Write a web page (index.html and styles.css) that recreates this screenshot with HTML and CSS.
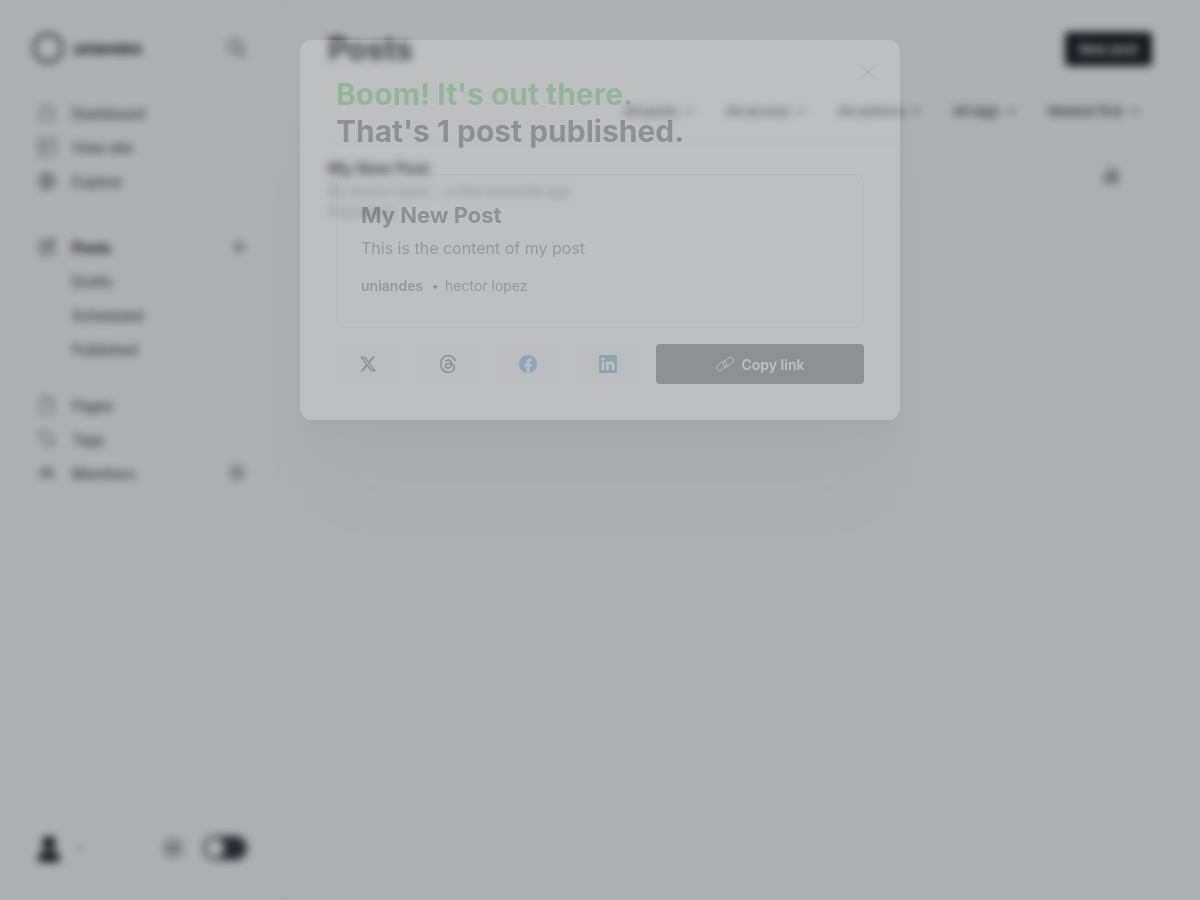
FILE: index.html
```html
<!DOCTYPE html>
<html lang="en">
<head>
<meta charset="utf-8">
<meta name="viewport" content="width=device-width, initial-scale=1">
<title>Posts</title>
<link rel="stylesheet" href="styles.css">
</head>
<body>
<div class="app">
  <nav class="sidebar" aria-label="Main">
    <header class="brand">
      <svg class="brand-logo" viewBox="0 0 32 32"><circle cx="16" cy="16" r="14"/></svg>
      <span class="brand-name">uniandes</span>
      <button class="plain" aria-label="Search"><svg class="icon-l" viewBox="0 0 20 20"><circle cx="8" cy="8" r="6.5"/><path d="M13 13l6 6"/></svg></button>
    </header>
    <ul class="menu">
      <li><a href="#"><svg class="icon" viewBox="0 0 18 18"><path d="M1 8l8-7 8 7M3 7v10h12V7"/></svg>Dashboard</a></li>
      <li><a href="#"><svg class="icon" viewBox="0 0 18 18"><rect x="1" y="1" width="16" height="16" rx="2"/><path d="M1 6h16M6 6v11"/></svg>View site</a></li>
      <li><a href="#"><svg class="icon" viewBox="0 0 18 18"><circle cx="9" cy="9" r="7.5"/><ellipse cx="9" cy="9" rx="3.5" ry="7.5"/><path d="M1.500 9h15M3 5h12M3 13h12"/></svg>Explore</a></li>
    </ul>
    <ul class="menu menu-posts">
      <li><a class="active" href="#"><svg class="icon" viewBox="0 0 18 18"><path d="M10 3H2v13h13V9M7 11l1-4 7-6 2 2-7 7z"/></svg>Posts</a><button class="plain" aria-label="New post"><svg class="icon-m plus" viewBox="0 0 16 16"><path d="M8 1v14M1 8h14"/></svg></button></li>
      <li><a class="sub" href="#">Drafts</a></li>
      <li><a class="sub" href="#">Scheduled</a></li>
      <li><a class="sub" href="#">Published</a></li>
    </ul>
    <ul class="menu">
      <li><a href="#"><svg class="icon" viewBox="0 0 18 18"><path d="M3 1h8l4 4v12H3zM11 1v4h4"/></svg>Pages</a></li>
      <li><a href="#"><svg class="icon" viewBox="0 0 18 18"><path d="M1 2l7-1 9 10-6 6L2 8z"/></svg>Tags</a></li>
      <li><a href="#"><svg class="icon" viewBox="0 0 18 18"><circle cx="6" cy="7" r="2.500"/><circle cx="12" cy="7" r="2.500"/><path d="M1 15c0-6 8-6 8 0 0-6 8-6 8 0"/></svg>Members</a><span class="count">0</span></li>
    </ul>
    <footer class="account">
      <button class="plain user" aria-label="Account"><svg class="avatar" viewBox="0 0 32 32"><circle cx="17" cy="11" r="7"/><path d="M6 26c0-5 4-7 11-7s11 2 11 7-4 4-11 4-11 1-11-4z"/></svg><svg class="chevron" viewBox="0 0 10 6"><path d="M1 1l4 4 4-4"/></svg></button>
      <button class="plain settings" aria-label="Settings"><svg class="icon-xl" viewBox="0 0 24 24"><circle cx="12" cy="12" r="9.500"/><circle cx="12" cy="12" r="4"/><path d="M12 1v22M1 12h22M4 4l16 16M20 4L4 20"/></svg></button>
      <input class="toggle" type="checkbox" aria-label="Night mode">
    </footer>
  </nav>
  <main class="content">
    <div class="page-head"><h1>Posts</h1><button class="new-post">New post</button></div>
    <div class="filters">
      <label><select aria-label="Type"><option>All posts</option></select><svg class="chevron" viewBox="0 0 10 6"><path d="M1 1l4 4 4-4"/></svg></label>
      <label><select aria-label="Access"><option>All access</option></select><svg class="chevron" viewBox="0 0 10 6"><path d="M1 1l4 4 4-4"/></svg></label>
      <label><select aria-label="Author"><option>All authors</option></select><svg class="chevron" viewBox="0 0 10 6"><path d="M1 1l4 4 4-4"/></svg></label>
      <label><select aria-label="Tag"><option>All tags</option></select><svg class="chevron" viewBox="0 0 10 6"><path d="M1 1l4 4 4-4"/></svg></label>
      <label><select aria-label="Sort"><option>Newest first</option></select><svg class="chevron" viewBox="0 0 10 6"><path d="M1 1l4 4 4-4"/></svg></label>
    </div>
    <article class="row">
      <div><h2>My New Post</h2><p>By hector lopez - a few seconds ago</p><p>Published</p></div>
      <button class="stats" aria-label="Analytics"><svg class="icon-m" viewBox="0 0 16 16"><path d="M1 9h4v6H1zM6 1h4v14H6zM11 6h4v9h-4z"/></svg></button>
    </article>
  </main>
</div>
<div class="overlay">
  <section class="modal" role="dialog" aria-modal="true" aria-labelledby="modal-title">
    <button class="close" aria-label="Close"><svg viewBox="0 0 16 16"><path d="M.5.5l15 15M15.500.5l-15 15"/></svg></button>
    <h2 class="modal-title" id="modal-title"><span>Boom! It's out there.</span><br>That's 1 post published.</h2>
    <a class="preview" href="#">
      <h3>My New Post</h3>
      <p class="excerpt">This is the content of my post</p>
      <p class="meta"><strong>uniandes</strong><span class="dot">•</span><span>hector lopez</span></p>
    </a>
    <div class="share">
      <a class="dark" href="#" aria-label="Share on X"><svg viewBox="0 0 24 24"><path d="M18.244 2.250h3.308l-7.227 8.260 8.502 11.240H16.170l-5.214-6.817L4.990 21.750H1.680l7.730-8.835L1.254 2.250H8.080l4.713 6.231zm-1.161 17.520h1.833L7.084 4.126H5.117z"/></svg></a>
      <a class="dark" href="#" aria-label="Share on Threads"><svg viewBox="0 0 24 24"><path d="M12.186 24h-.007c-3.581-.024-6.334-1.205-8.184-3.509C2.350 18.440 1.500 15.586 1.472 12.010v-.017c.030-3.579.879-6.430 2.525-8.482C5.845 1.205 8.600.024 12.180 0h.014c2.746.020 5.043.725 6.826 2.098 1.677 1.290 2.858 3.130 3.509 5.467l-2.040.569c-1.104-3.960-3.898-5.984-8.304-6.015-2.910.022-5.110.936-6.540 2.717C4.307 6.504 3.616 8.914 3.589 12c.027 3.086.718 5.496 2.057 7.164 1.430 1.783 3.631 2.698 6.540 2.717 2.623-.020 4.358-.631 5.800-2.045 1.647-1.613 1.618-3.593 1.090-4.798-.310-.710-.873-1.300-1.634-1.750-.192 1.352-.622 2.446-1.284 3.272-.886 1.102-2.140 1.704-3.730 1.790-1.202.065-2.361-.218-3.259-.801-1.063-.689-1.685-1.740-1.752-2.964-.065-1.190.408-2.285 1.330-3.082.880-.760 2.119-1.207 3.583-1.291a13.853 13.853 0 0 1 3.020.142c-.126-.742-.375-1.332-.750-1.757-.513-.586-1.308-.883-2.359-.890h-.029c-.844 0-1.992.232-2.721 1.320L7.734 7.847c.980-1.454 2.568-2.256 4.478-2.256h.044c3.194.020 5.097 1.975 5.287 5.388.108.046.216.094.321.142 1.490.700 2.580 1.761 3.154 3.070.797 1.820.871 4.790-1.548 7.158-1.850 1.810-4.094 2.628-7.277 2.650Zm1.003-11.690c-.242 0-.487.007-.739.021-1.836.103-2.980.946-2.916 2.143.067 1.256 1.452 1.839 2.784 1.767 1.224-.065 2.818-.543 3.086-3.710a10.500 10.500 0 0 0-2.215-.221z"/></svg></a>
      <a class="facebook" href="#" aria-label="Share on Facebook"><svg viewBox="0 0 24 24"><path d="M24 12.073C24 5.446 18.627 0 12 0S0 5.446 0 12.073c0 5.990 4.388 10.954 10.125 11.854v-8.385H7.078v-3.469h3.047V9.430c0-3.007 1.792-4.669 4.533-4.669 1.312 0 2.686.235 2.686.235v2.953H15.830c-1.491 0-1.956.925-1.956 1.874v2.250h3.328l-.532 3.469h-2.796v8.385C19.612 23.027 24 18.062 24 12.073z"/></svg></a>
      <a class="linkedin" href="#" aria-label="Share on LinkedIn"><svg viewBox="0 0 24 24"><rect width="24" height="24" rx="2"/><g fill="#fff"><circle cx="5.340" cy="5.370" r="2.060"/><path d="M3.560 9h3.560v11.450H3.560zM9.350 9h3.410v1.560c.480-.900 1.640-1.850 3.370-1.850 3.610 0 4.270 2.370 4.270 5.460v6.280h-3.550v-5.570c0-1.330-.030-3.040-1.850-3.040-1.860 0-2.140 1.450-2.140 2.940v5.670H9.350z"/></g></svg></a>
      <button class="copy"><svg viewBox="0 0 24 24"><rect x="0" y="10.500" width="15" height="8" rx="4" transform="rotate(-38 7.500 14.500)"/><rect x="9" y="5.500" width="15" height="8" rx="4" transform="rotate(-38 16.500 9.500)"/></svg>Copy link</button>
    </div>
  </section>
</div>
</body>
</html>
```
FILE: styles.css
```css
* { box-sizing: border-box; }
body, h1, h2, h3, p, ul { margin: 0; padding: 0; }
body { font-family: Inter, "Liberation Sans", sans-serif; font-size: 14px; color: #15171a; background: #fff; }
ul { list-style: none; }
a { color: inherit; text-decoration: none; }
button, select { font: inherit; color: inherit; border: 0; background: none; padding: 0; }
svg { display: block; flex: none; fill: none; stroke: currentColor; stroke-width: 1.2; }

.app { display: flex; min-height: 100vh; }
.plain { display: flex; align-items: center; gap: 12px; color: #394047; }
.icon { width: 18px; height: 18px; }
.icon-m { width: 16px; height: 16px; }
.icon-l { width: 20px; height: 20px; stroke-width: 1.5; }
.icon-xl { width: 24px; height: 24px; }
.plus { stroke-width: 1.5; }
.chevron { width: 10px; height: 6px; }

.sidebar { display: flex; flex-direction: column; width: 281px; flex: none; padding: 32px 33px 36px 32px; border-right: 1px solid #ebeef0; }
.brand { display: flex; align-items: center; gap: 10px; height: 32px; margin-bottom: 32px; }
.brand-logo { width: 32px; height: 32px; stroke-width: 3; color: #394047; }
.brand-name { flex: 1; font-size: 15px; font-weight: 700; }
.menu { margin-bottom: 32px; }
.menu-posts { margin-bottom: 22px; }
.menu li { display: flex; align-items: center; justify-content: space-between; height: 34px; }
.menu a { display: flex; align-items: center; gap: 16px; padding-left: 6px; color: #4a5057; font-weight: 500; }
.menu .sub { padding-left: 40px; }
.menu .active { font-weight: 700; color: #15171a; }
.count { width: 20px; border-radius: 10px; background: #dde1e5; color: #394047; font-size: 12px; line-height: 20px; text-align: center; }
.account { display: flex; align-items: center; gap: 18px; margin-top: auto; }
.user { margin-right: auto; color: #7c8b9a; }
.settings { color: #7c7f82; }
.avatar { width: 32px; height: 32px; fill: #15171a; stroke: none; }
.toggle { appearance: none; width: 44px; height: 24px; margin: 0; border: 2px solid #394047; border-radius: 12px; background: radial-gradient(circle at 10px 50%, #fff 9px, #2b2e31 10px); }

.content { flex: 1; min-width: 0; padding: 32px 48px 32px 47px; }
.page-head { display: flex; align-items: center; justify-content: space-between; height: 34px; }
h1 { font-size: 31px; font-weight: 700; line-height: 34px; }
.new-post { height: 34px; padding: 0 14px; border-radius: 4px; background: #15171a; color: #fff; font-size: 13px; font-weight: 600; }
.filters { display: flex; justify-content: flex-end; gap: 8px; padding: 28px 0 12px; border-bottom: 1px solid #ebeef0; }
.filters label { display: flex; align-items: center; gap: 6px; height: 34px; padding: 0 12px; }
.filters select { appearance: none; color: #394047; font-size: 13px; font-weight: 500; }
.row { display: flex; justify-content: space-between; align-items: flex-start; padding: 15px 0; }
.row h2 { font-size: 16px; font-weight: 600; line-height: 24px; }
.row p { color: #95a1ad; line-height: 21px; }
.stats { display: grid; place-items: center; width: 54px; height: 38px; margin-right: 14px; border: 1px solid #f1f3f4; border-radius: 4px; color: #394047; }

.overlay { position: fixed; inset: 0; padding: 40px 24px; background: rgba(29, 31, 36, .355); backdrop-filter: blur(4px); }
.modal { position: relative; max-width: 600px; margin: 0 auto; padding: 36px; border-radius: 12px; background: #fff; opacity: .2;
  box-shadow: 0 3px 2px rgba(0,0,0,.02), 0 7px 5px rgba(0,0,0,.028), 0 12px 10px rgba(0,0,0,.035), 0 22px 18px rgba(0,0,0,.042), 0 42px 33px rgba(0,0,0,.05), 0 100px 90px rgba(0,0,0,.08); }
.close { position: absolute; top: 24px; right: 24px; color: #7c8b9a; }
.close svg { width: 16px; height: 16px; stroke-width: 1; }
.modal-title { margin-bottom: 24px; font-size: 30px; font-weight: 700; line-height: 37px; }
.modal-title span { color: #30cf43; }
.preview { display: block; padding: 26px 24px 30px; border: 1px solid #dde1e5; border-radius: 8px; }
.preview h3 { font-size: 22px; font-weight: 700; line-height: 28px; }
.excerpt { margin: 8px 0 16px; color: #394047; font-size: 16px; font-weight: 400; line-height: 22px; }
.meta { display: flex; color: #394047; line-height: 22px; }
.meta strong { font-weight: 600; }
.dot { margin: 0 6px 0 8px; }
.share { display: flex; gap: 16px; margin-top: 16px; }
.share a { display: grid; place-items: center; width: 64px; height: 40px; border-radius: 4px; background: #f1f3f4; }
.share svg { width: 18px; height: 18px; }
.share a svg { stroke: none; }
.dark svg { fill: #15171a; }
.facebook svg { fill: #1877f2; }
.linkedin svg { fill: #0a7fa8; }
.copy { display: flex; flex: 1; align-items: center; justify-content: center; gap: 8px; height: 40px; border-radius: 4px; background: #15171a; color: #fff; font-weight: 600; }
```
